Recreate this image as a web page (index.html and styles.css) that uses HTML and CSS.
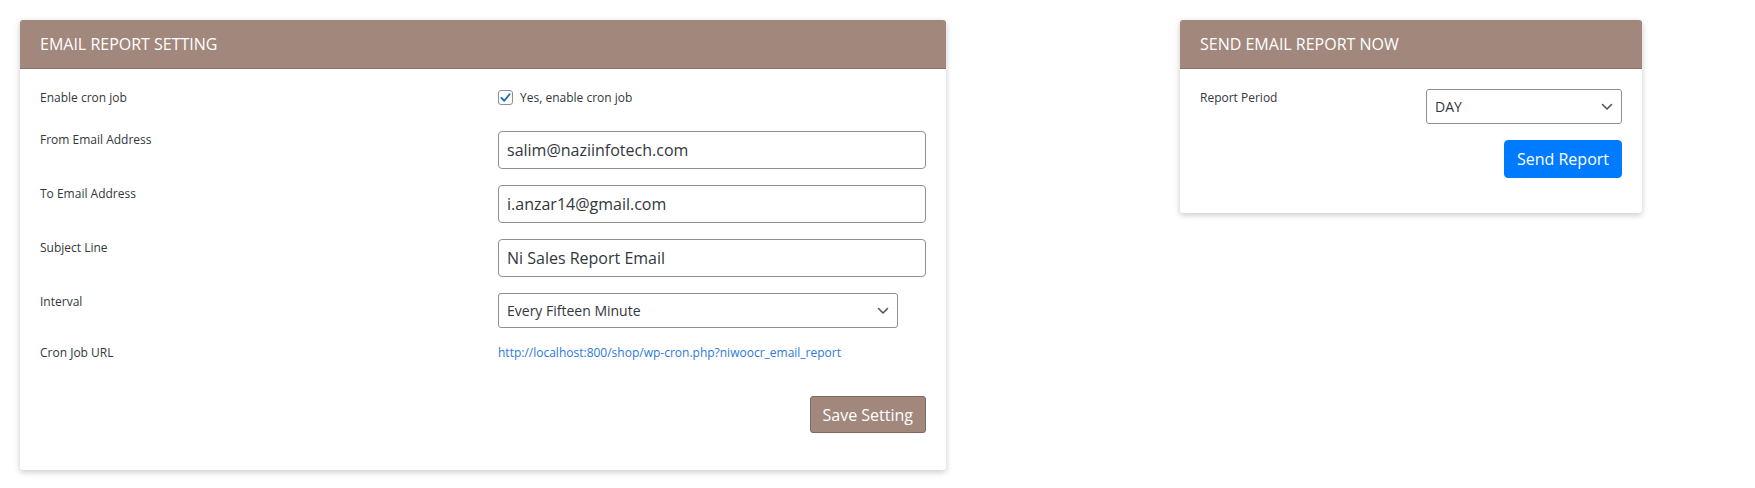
FILE: index.html
```html
<!DOCTYPE html>
<html lang="en">
<head>
<meta charset="utf-8">
<title>Email Report</title>
<link rel="stylesheet" href="styles.css">
</head>
<body>
<div class="page">
  <section class="card card-main">
    <header class="card-header">EMAIL REPORT SETTING</header>
    <div class="card-body">
      <div class="form-row row-check">
        <label class="field-label">Enable cron job</label>
        <div class="check-wrap">
          <span class="checkbox">
            <svg viewBox="0 0 16 16" width="13" height="13"><path d="M3 8.5 L6.5 12 L13 4" fill="none" stroke="#2271b1" stroke-width="2.4" stroke-linecap="round" stroke-linejoin="round"/></svg>
          </span>
          <span class="check-text">Yes, enable cron job</span>
        </div>
      </div>
      <div class="form-row">
        <label class="field-label">From Email Address</label>
        <input class="text-input" type="text" value="salim@naziinfotech.com">
      </div>
      <div class="form-row">
        <label class="field-label">To Email Address</label>
        <input class="text-input" type="text" value="i.anzar14@gmail.com">
      </div>
      <div class="form-row">
        <label class="field-label">Subject Line</label>
        <input class="text-input" type="text" value="Ni Sales Report Email">
      </div>
      <div class="form-row">
        <label class="field-label">Interval</label>
        <div class="select-wrap select-interval">
          <select class="select"><option>Every Fifteen Minute</option></select>
          <svg class="chevron" viewBox="0 0 12 8" width="12" height="8"><path d="M1.5 1.5 L6 6 L10.5 1.5" fill="none" stroke="#555" stroke-width="1.6" stroke-linecap="round" stroke-linejoin="round"/></svg>
        </div>
      </div>
      <div class="form-row">
        <label class="field-label">Cron Job URL</label>
        <a class="cron-link" href="#">http://localhost:800/shop/wp-cron.php?niwoocr_email_report</a>
      </div>
      <div class="actions">
        <button class="btn btn-brown" type="button">Save Setting</button>
      </div>
    </div>
  </section>

  <section class="card card-side">
    <header class="card-header">SEND EMAIL REPORT NOW</header>
    <div class="card-body side-body">
      <div class="side-row">
        <label class="field-label">Report Period</label>
        <div class="select-wrap">
          <select class="select"><option>DAY</option></select>
          <svg class="chevron" viewBox="0 0 12 8" width="12" height="8"><path d="M1.5 1.5 L6 6 L10.5 1.5" fill="none" stroke="#555" stroke-width="1.6" stroke-linecap="round" stroke-linejoin="round"/></svg>
        </div>
      </div>
      <div class="actions side-actions">
        <button class="btn btn-blue" type="button">Send Report</button>
      </div>
    </div>
  </section>
</div>
</body>
</html>
```
FILE: styles.css
```css
* { box-sizing: border-box; }

html, body {
  margin: 0;
  background: #ffffff;
  font-family: "Open Sans", "Liberation Sans", sans-serif;
  color: #32373c;
}

.page {
  display: grid;
  grid-template-columns: 926px 462px;
  column-gap: 234px;
  align-items: start;
  padding: 20px;
}

.card {
  background: #ffffff;
  border-radius: 3px;
  box-shadow: 0 2px 6px rgba(0, 0, 0, 0.22);
  overflow: hidden;
}

.card-header {
  height: 49px;
  display: flex;
  align-items: center;
  padding: 0 20px;
  background: #a1877c;
  border-bottom: 1px solid #8b7369;
  color: #ffffff;
  font-size: 16px;
}

.card-body {
  padding: 20px 20px 37px;
}

.form-row {
  display: grid;
  grid-template-columns: 428px 428px;
  column-gap: 30px;
  align-items: start;
  margin-bottom: 16px;
}

.row-check {
  min-height: 26px;
}

.field-label {
  font-size: 12px;
  line-height: 18px;
  color: #32373c;
}

.check-wrap {
  display: flex;
  align-items: flex-start;
  gap: 7px;
}

.checkbox {
  width: 15px;
  height: 15px;
  border: 1px solid #8c8f94;
  border-radius: 3px;
  display: flex;
  align-items: center;
  justify-content: center;
  margin-top: 1px;
  background: #fff;
}

.check-text {
  font-size: 12px;
  line-height: 18px;
}

.text-input {
  width: 428px;
  height: 38px;
  padding: 0 8px;
  border: 1px solid #8c8f94;
  border-radius: 4px;
  font-family: inherit;
  font-size: 16px;
  color: #32373c;
  background: #fff;
}

.select-wrap {
  position: relative;
  width: 196px;
  height: 35px;
}

.select-interval {
  width: 400px;
}

.select {
  appearance: none;
  -webkit-appearance: none;
  width: 100%;
  height: 100%;
  padding: 0 30px 0 8px;
  border: 1px solid #8c8f94;
  border-radius: 3px;
  background: #fff;
  font-family: inherit;
  font-size: 14px;
  color: #32373c;
}

.chevron {
  position: absolute;
  right: 9px;
  top: 14px;
  pointer-events: none;
}

.cron-link {
  font-size: 12px;
  line-height: 18px;
  color: #2b79e0;
  text-decoration: none;
}

.actions {
  display: flex;
  justify-content: flex-end;
  margin-top: 34px;
}

.btn {
  font-family: inherit;
  font-size: 16px;
  color: #ffffff;
  cursor: pointer;
}

.btn-brown {
  height: 37px;
  padding: 0 12px;
  background: #a1877c;
  border: 1px solid #7f675d;
  border-radius: 3px;
}

.btn-blue {
  height: 38px;
  padding: 0 12px;
  background: #007bff;
  border: 1px solid #007bff;
  border-radius: 4px;
}

.side-body {
  padding: 20px 20px 35px;
}

.side-row {
  display: flex;
  justify-content: space-between;
  align-items: flex-start;
}

.side-actions {
  margin-top: 16px;
}
```
